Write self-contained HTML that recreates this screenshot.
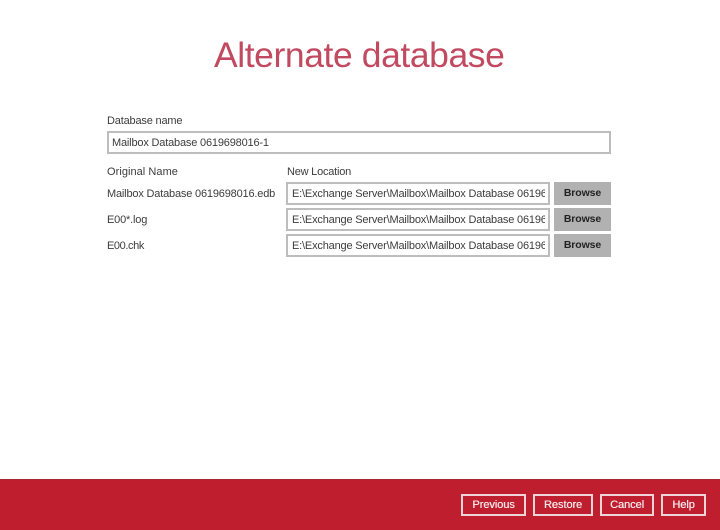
<!DOCTYPE html>
<html><head><meta charset="utf-8"><style>
html,body{margin:0;padding:0;width:720px;height:530px;overflow:hidden;background:#fff}
body{position:relative;font-family:"Liberation Sans",Arial,sans-serif;font-size:11px;color:#3c3c3c}
.a{position:absolute;white-space:nowrap}
.t{line-height:14px;letter-spacing:-.18px}
.box{position:absolute;box-sizing:border-box;background:#fff;border:2px solid #bdbdbd;white-space:nowrap;line-height:20px;color:#3c3c3c;letter-spacing:-.18px}
.box div{position:absolute;left:4px;top:0;right:3px;height:19px;overflow:hidden}
.br{position:absolute;left:554px;width:57px;height:23px;background:#b1b1b1;color:#222;font-weight:bold;text-align:center;line-height:23px;font-size:10.5px;letter-spacing:-.1px}
.f{position:absolute;top:494px;height:22px;box-sizing:border-box;border:2px solid #eed4d8;color:#f6e6e8;text-align:center;line-height:19px;font-size:11px;letter-spacing:-.05px;text-shadow:.3px 0 0 #f6e6e8}
</style></head><body>
<div class="a" style="left:214px;top:34px;font-size:35.5px;line-height:42px;color:#c24a60;letter-spacing:-.42px">Alternate database</div>
<div class="a t" style="left:107px;top:114px">Database name</div>
<div class="box" style="left:107px;top:131px;width:504px;height:23px"><div style="left:3px">Mailbox Database 0619698016-1</div></div>
<div class="a t" style="left:107px;top:165px;letter-spacing:.05px">Original Name</div>
<div class="a t" style="left:287px;top:165px;letter-spacing:-.22px">New Location</div>
<div class="a t" style="left:107px;top:187px">Mailbox Database 0619698016.edb</div>
<div class="a t" style="left:107px;top:213px">E00*.log</div>
<div class="a t" style="left:107px;top:239px;letter-spacing:-.4px">E00.chk</div>
<div class="box" style="left:286px;top:182px;width:264px;height:23px"><div>E:\Exchange Server\Mailbox\Mailbox Database 0619698016</div></div>
<div class="box" style="left:286px;top:208px;width:264px;height:23px"><div>E:\Exchange Server\Mailbox\Mailbox Database 0619698016</div></div>
<div class="box" style="left:286px;top:234px;width:264px;height:23px"><div>E:\Exchange Server\Mailbox\Mailbox Database 0619698016</div></div>
<div class="br" style="top:182px">Browse</div>
<div class="br" style="top:208px">Browse</div>
<div class="br" style="top:234px">Browse</div>
<div class="a" style="left:0;top:479px;width:720px;height:51px;background:#bf1e2e;border-top:1px solid #a5262f;box-sizing:border-box"></div>
<div class="f" style="left:461px;width:65px">Previous</div>
<div class="f" style="left:533px;width:60px">Restore</div>
<div class="f" style="left:600px;width:54px">Cancel</div>
<div class="f" style="left:661px;width:45px">Help</div>
</body></html>
